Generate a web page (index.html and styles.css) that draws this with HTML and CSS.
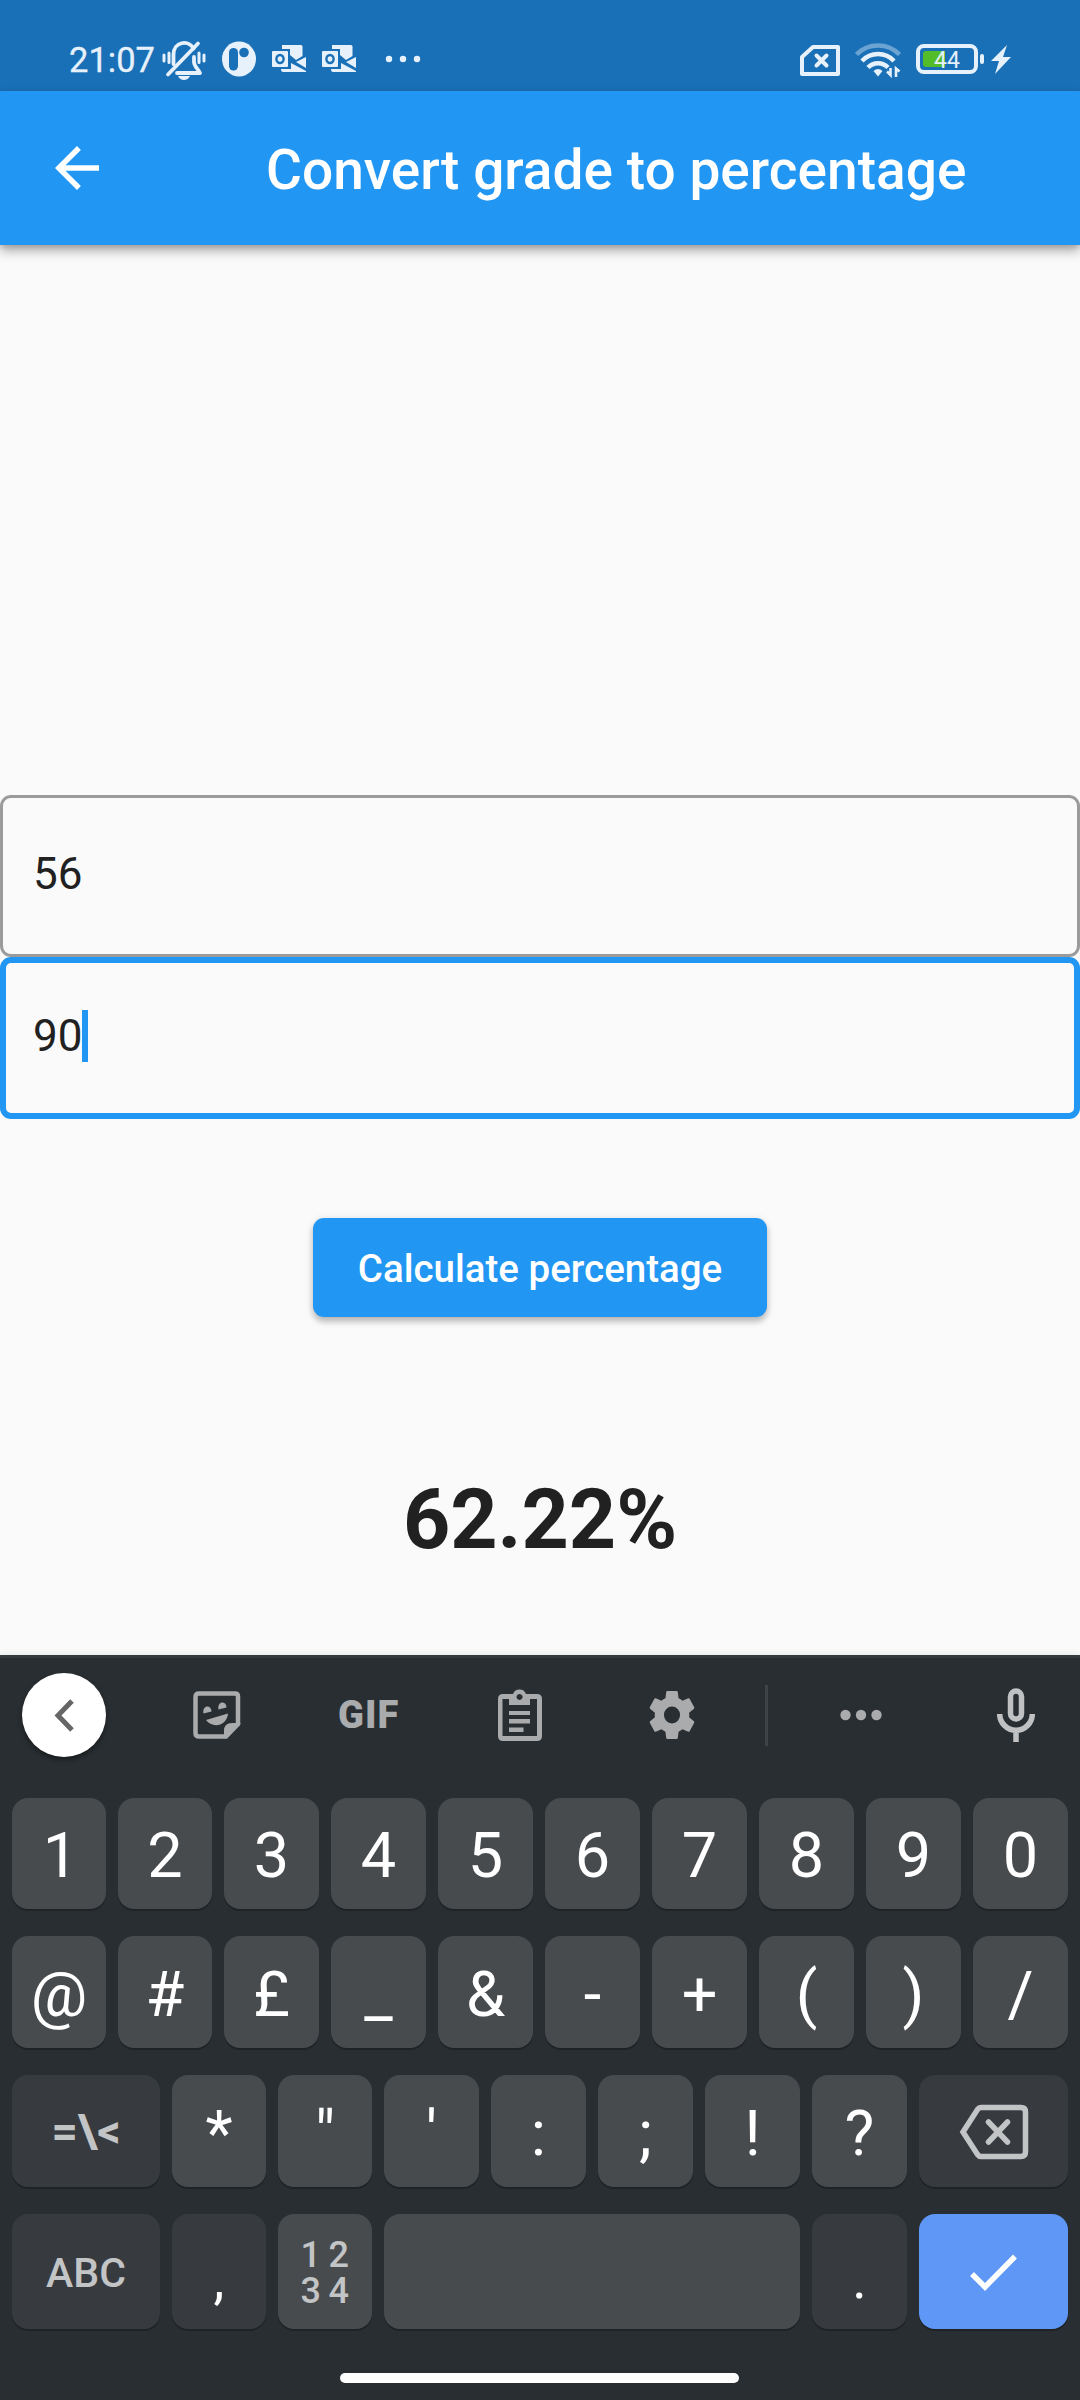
FILE: index.html
```html
<!DOCTYPE html>
<html lang="en">
<head>
<meta charset="utf-8">
<title>Convert grade to percentage</title>
<link rel="stylesheet" href="styles.css">
</head>
<body>
<div class="screen">
  <div class="status">
    <span class="time">21:07</span>
    <svg class="mute" width="46" height="42" viewBox="0 0 46 42" fill="none" stroke="#e6f1fb" stroke-width="3.800" stroke-linecap="round"><path d="M12.500 24V14.500c0-13 15-15 20-6"/><path d="M33 17v5c0 4 4 7 6 11H16" stroke-linejoin="round"/><path d="M37 3.500 7 34.500"/><path d="M3 15v6M8 13v9.500M38 13v9.500M43 15v6" stroke-width="3"/><path d="M17 36h12q-2 4-6 4t-6-4z" fill="#e6f1fb" stroke="none"/></svg>
    <svg class="app" width="34" height="36" viewBox="0 0 34 36"><ellipse cx="17" cy="18" rx="17" ry="17.500" fill="#e6f1fb"/><rect x="7" y="7" width="9" height="22.500" rx="4.500" fill="#1a70b7"/><circle cx="22" cy="11.500" r="4.800" fill="#1a70b7"/></svg>
    <svg class="mail" width="34" height="28" viewBox="0 0 34 28"><path fill="#e6f1fb" d="M10 0h19q1.500 0 1.500 1.500V11L24 15l-6-5V4H10zM34 12v11L24 17zM9 24h10v-6l15 8v1H11q-2 0-2-3z"/><rect y="6" width="16" height="16" rx="1" fill="#e6f1fb"/><ellipse cx="8" cy="14" rx="3.600" ry="4" fill="none" stroke="#1a70b7" stroke-width="2.400"/></svg>
    <svg class="mail" width="34" height="28" viewBox="0 0 34 28"><path fill="#e6f1fb" d="M10 0h19q1.500 0 1.500 1.500V11L24 15l-6-5V4H10zM34 12v11L24 17zM9 24h10v-6l15 8v1H11q-2 0-2-3z"/><rect y="6" width="16" height="16" rx="1" fill="#e6f1fb"/><ellipse cx="8" cy="14" rx="3.600" ry="4" fill="none" stroke="#1a70b7" stroke-width="2.400"/></svg>
    <svg class="more" width="36" height="8" viewBox="0 0 36 8" fill="#e6f1fb"><circle cx="4" cy="4" r="3.200"/><circle cx="18" cy="4" r="3.200"/><circle cx="32" cy="4" r="3.200"/></svg>
    <div class="right">
      <svg class="sim" width="40" height="31" viewBox="0 0 40 31" fill="none" stroke="#e6f1fb" stroke-width="4" stroke-linejoin="round"><path d="M13 2h25v27H2V12z"/><path d="m16.500 10.500 10 10m0-10-10 10" stroke-linecap="round"/></svg>
      <svg class="wifi" width="46" height="36" viewBox="0 0 46 36" fill="none" stroke="#e6f1fb" stroke-width="4.500"><path d="M1.500 12.500a30 30 0 0 1 43 0" opacity=".4"/><path d="M7 19a22 22 0 0 1 32 0"/><path d="M13 25.500a14 14 0 0 1 20 0"/><path d="M18.500 29q4.500-4 9 0L23 34.500z" fill="#e6f1fb" stroke="none"/><path d="M32 29.500l3.500 3.500V26M44.500 29.500 41 26.500V35" stroke-width="2.600"/></svg>
      <div class="battery"><span class="level"></span><span class="pct">44</span></div><span class="nub"></span>
      <svg class="bolt" width="20" height="29" viewBox="0 0 20 29"><path fill="#e6f1fb" d="M16 0 0 16h8L4 29l16-17h-8z"/></svg>
    </div>
  </div>
  <header class="appbar">
    <svg width="66" height="66" viewBox="0 0 24 24"><path fill="#fff" d="M20 11H7.830l5.590-5.590L12 4l-8 8 8 8 1.410-1.410L7.830 13H20z"/></svg>
    <h1>Convert grade to percentage</h1>
  </header>
  <main class="content">
    <div class="field">56</div>
    <div class="field focused">90<span class="caret"></span></div>
    <button class="calc">Calculate percentage</button>
    <div class="result">62.22%</div>
  </main>
  <section class="keyboard">
    <div class="tools">
      <div class="tool back"><svg width="20" height="33" viewBox="0 0 20 33"><path d="M18 2 4 16.500 18 31" fill="none" stroke="#666" stroke-width="5"/></svg></div>
      <div class="tool sticker"><svg width="48" height="48" viewBox="0 0 48 48"><path d="M6 2.500h36q3 0 3 3V33L33 45.500H6q-3.500 0-3.500-3.500V6q0-3.500 3.500-3.500z" fill="none" stroke="#a9abad" stroke-width="4.500"/><path d="M31 48V40q0-8 8-8h9z" fill="#a9abad"/><path d="M10.500 22.500c-1.500-9 8-9 8-2zM25.500 18.500c-1.500-9 8-9 8-2zM13 29l22-6.500c-1 13-16 15-22 6.500z" fill="#a9abad"/></svg></div>
      <div class="tool gif">GIF</div>
      <div class="tool clip"><svg width="44" height="52" viewBox="0 0 44 52"><path fill="#a9abad" fill-rule="evenodd" d="M5 5h10a7 7 0 0 1 13 0h11q5 0 5 5v37q0 5-5 5H5q-5 0-5-5V10q0-5 5-5zM4.500 10v37h34.500V10h-7v6H11v-6zM21.500 5a3 3 0 1 0 .1 0zM11 22h21v4H11zm0 8h21v4.500H11zm0 8.500h14.500V43H11z"/></svg></div>
      <div class="tool gear"><svg width="46" height="48" viewBox="2 2 20 20" preserveAspectRatio="none"><path fill="#a9abad" d="M19.430 12.980c.04-.32.07-.64.07-.98s-.03-.66-.07-.98l2.110-1.650c.19-.15.24-.42.12-.64l-2-3.460c-.12-.22-.39-.3-.61-.22l-2.490 1c-.52-.4-1.080-.73-1.690-.98l-.38-2.650C14.460 2.180 14.250 2 14 2h-4c-.25 0-.46.18-.49.42l-.38 2.650c-.61.25-1.170.59-1.690.98l-2.490-1c-.23-.09-.49 0-.61.22l-2 3.460c-.13.22-.07.49.12.64l2.110 1.650c-.04.32-.07.65-.07.98s.03.66.07.98l-2.110 1.650c-.19.15-.24.42-.12.64l2 3.460c.12.22.39.3.61.22l2.490-1c.52.4 1.080.73 1.690.98l.38 2.650c.03.24.24.42.49.42h4c.25 0 .46-.18.49-.42l.38-2.650c.61-.25 1.170-.59 1.690-.98l2.490 1c.23.09.49 0 .61-.22l2-3.460c.12-.22.07-.49-.12-.64zM12 15.500A3.500 3.500 0 1 1 12 8.500a3.500 3.500 0 0 1 0 7z"/></svg></div>
      <div class="divider"></div>
      <div class="tool dots"><svg width="42" height="12" viewBox="0 0 42 12" fill="#a9abad"><circle cx="5.500" cy="6" r="5.200"/><circle cx="21" cy="6" r="5.200"/><circle cx="36.500" cy="6" r="5.200"/></svg></div>
      <div class="tool mic"><svg width="38" height="54" viewBox="0 0 38 54" fill="none" stroke="#c0c1c3" stroke-width="5.500"><rect x="13.500" y="3" width="11" height="28" rx="5.500"/><path d="M2.700 26v0a16.300 16.300 0 0 0 32.600 0M19 42v12"/></svg></div>
    </div>
    <div class="row ten digits"><div class="key">1</div><div class="key">2</div><div class="key">3</div><div class="key">4</div><div class="key">5</div><div class="key">6</div><div class="key">7</div><div class="key">8</div><div class="key">9</div><div class="key">0</div></div>
    <div class="row ten"><div class="key">@</div><div class="key">#</div><div class="key">£</div><div class="key">_</div><div class="key">&amp;</div><div class="key">-</div><div class="key">+</div><div class="key">(</div><div class="key">)</div><div class="key">/</div></div>
    <div class="row mixed"><div class="key wide dark label symbols">=\&lt;</div><div class="key">*</div><div class="key">"</div><div class="key">'</div><div class="key">:</div><div class="key">;</div><div class="key">!</div><div class="key">?</div><div class="key wide dark"><svg width="70" height="56" viewBox="0 0 70 56" fill="none" stroke="#c3c4c6" stroke-width="5.500"><path d="M22 3.500h40q4.500 0 4.500 4.500v40q0 4.500-4.500 4.500H22q-2 0-3.500-2L4 28 18.500 5.500q1.500-2 3.500-2z"/><path d="m29.500 18 19 20m0-20-19 20" stroke-linecap="round"/></svg></div></div>
    <div class="row mixed bottom"><div class="key wide dark label">ABC</div><div class="key dark punct">,</div><div class="key numpad"><span>1</span><span>2</span><span>3</span><span>4</span></div><div class="key space"></div><div class="key dark punct">.</div><div class="key wide enter"><svg width="50" height="40" viewBox="0 0 50 40"><path d="M3 21 16 34 46 3.500" fill="none" stroke="#fff" stroke-width="5.500"/></svg></div></div>
    <div class="home"></div>
  </section>
</div>
</body>
</html>
```
FILE: styles.css
```css
* { box-sizing: border-box; }
body { margin: 0; background: #fafafa; font-family: Roboto, sans-serif; }
svg { display: block; flex: none; }
.screen { width: 1080px; height: 2400px; display: flex; flex-direction: column; overflow: hidden; }

.status { height: 91px; flex: none; background: #1a70b7; color: #e6f1fb; display: flex; align-items: flex-start; padding-left: 69px; }
.time { width: 92px; font-size: 34.500px; line-height: 41px; margin-top: 40px; -webkit-text-stroke: .3px #e6f1fb; }
.mute { margin-top: 40px; }
.app { margin: 41px 0 0 15px; }
.mail { margin: 45px 0 0 16px; }
.more { margin: 55px 0 0 29px; }
.right { margin-left: auto; display: flex; padding-right: 69px; }
.sim { margin-top: 45px; }
.wifi { margin: 42px 0 0 15px; }
.battery { width: 62px; height: 30px; margin: 44px 0 0 15px; border: 4px solid #e6f1fb; border-radius: 8px; position: relative; padding: 3px; }
.level { display: block; width: 22px; height: 16px; border-radius: 3px 0 0 3px; background: #52bd28; }
.pct { position: absolute; left: 14px; top: 1px; font-size: 23px; line-height: 23px; }
.nub { width: 4px; height: 10px; border-radius: 2px; background: #e6f1fb; margin: 54px 0 0 2px; }
.bolt { margin: 45px 0 0 7px; }

.appbar { height: 154px; flex: none; background: #2196f3; color: #fff; display: flex; align-items: center; padding-left: 44px; box-shadow: 0 6px 11px rgba(0,0,0,.3), 0 2px 6px rgba(0,0,0,.14); z-index: 1; }
.appbar h1 { margin: 4px 0 0 156px; font-size: 55px; font-weight: 500; line-height: 66px; letter-spacing: .03px; white-space: nowrap; }

.content { height: 1410px; flex: none; padding-top: 550px; display: flex; flex-direction: column; align-items: center; color: #212121; }
.field { width: 1080px; height: 162px; flex: none; border: 3px solid #9b9b9b; border-radius: 11px; padding: 0 0 5px 30px; display: flex; align-items: center; font-size: 44px; }
.focused { border: 6px solid #2196f3; padding-left: 27px; padding-bottom: 4px; }
.caret { width: 6px; height: 52px; background: #2196f3; }
.calc { width: 454px; height: 99px; margin-top: 99px; border: 0; border-radius: 11px; background: #2196f3; color: #fff; font: 500 38.500px/46px Roboto, sans-serif; padding: 2px 0 0; box-shadow: 0 5px 6px rgba(0,0,0,.22), 0 1px 8px rgba(0,0,0,.1); }
.result { margin-top: 154px; font-size: 82.500px; font-weight: 700; line-height: 98px; }

.keyboard { height: 745px; flex: none; background: #292e32; border-top: 3px solid #343b3e; box-shadow: 0 -1px 6px rgba(0,0,0,.08); padding: 0 12px; color: #fff; display: flex; flex-direction: column; }
.tools { height: 140px; flex: none; display: flex; align-items: center; padding: 0 33px 26px 10px; }
.back { width: 84px; height: 84px; border-radius: 50%; background: #fff; display: flex; align-items: center; justify-content: center; box-shadow: 0 3px 5px rgba(0,0,0,.4); }
.sticker { margin-left: 87px; }
.gif { width: 63px; margin-left: 97px; font-size: 38px; font-weight: 900; line-height: 44px; letter-spacing: 1px; color: #a9abad; }
.clip { margin-left: 97px; }
.gear { margin-left: 107px; }
.divider { width: 3px; height: 61px; margin-left: 70px; background: #3e4347; }
.dots { margin-left: 72px; }
.mic { margin-left: auto; }

.row { display: flex; gap: 12px; height: 112px; flex: none; margin-bottom: 27px; }
.digits { height: 111px; }
.bottom { height: 115px; margin-bottom: 44px; }
.key { width: 95px; flex: none; border-radius: 16px; background: #484b4e; box-shadow: 0 2px 0 #1f2326; display: flex; align-items: center; justify-content: center; font-size: 63px; line-height: 74px; padding-top: 5px; }
.ten .key:nth-child(-n+2), .mixed .key:nth-child(2), .mixed .key:nth-child(3) { width: 94px; }
.digits .key:first-child { padding-left: 3px; }
.wide { width: 149px; padding-top: 2px; }
.wide:first-child { width: 148px; }
.dark { background: #373b3f; }
.label { font-size: 41px; line-height: 48px; font-weight: 500; color: #c3c4c6; padding-top: 3px; }
.symbols { font-size: 46px; font-weight: 700; padding: 0; }
.punct { font-size: 55px; padding-top: 15px; }
.numpad { display: grid; grid-template-columns: 28px 21px; align-content: center; font-size: 36px; font-weight: 500; line-height: 36px; color: #c3c4c6; padding-top: 2px; }
.space { width: 416px; }
.enter { background: #5e97f6; }
.home { width: 399px; height: 10px; border-radius: 5px; background: #fff; margin: 0 0 0 328px; }
```
